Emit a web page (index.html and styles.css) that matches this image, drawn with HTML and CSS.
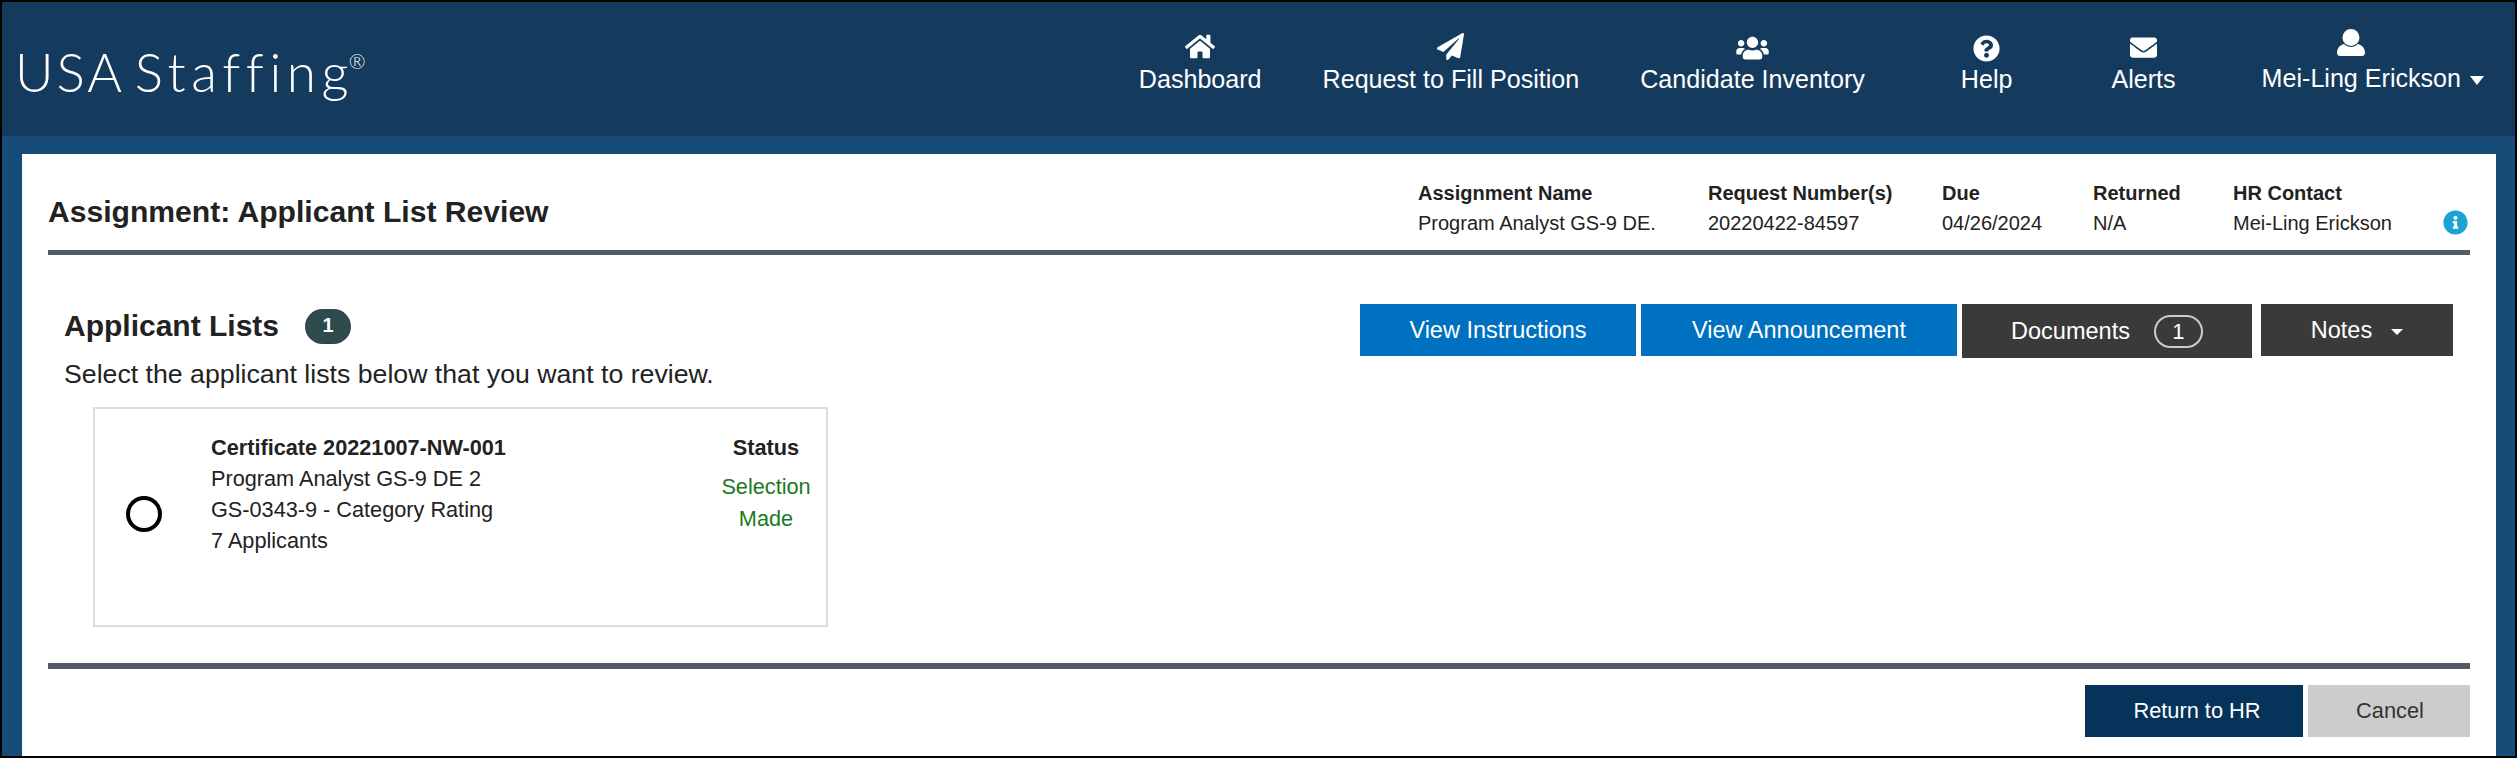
FILE: index.html
```html
<!DOCTYPE html>
<html lang="en">
<head>
  <meta charset="UTF-8">
  <title>USA Staffing - Applicant List Review</title>
  <link rel="stylesheet" href="styles.css">
</head>
<body>
  <div class="page">
    <header class="topbar">
      <div class="logo">USA <span class="logo-word">Staffin<span class="logo-end">g</span></span><sup>®</sup></div>
      <nav class="nav">
        <a class="nav-item">
          <svg class="icon-home" viewBox="0 0 576 512"><path d="M280.37 148.26L96 300.11V464a16 16 0 0 0 16 16l112.06-.29a16 16 0 0 0 15.92-16V368a16 16 0 0 1 16-16h64a16 16 0 0 1 16 16v95.64a16 16 0 0 0 16 16.05L464 480a16 16 0 0 0 16-16V300L295.67 148.26a12.19 12.19 0 0 0-15.3 0zM571.6 251.47L488 182.56V44.05a12 12 0 0 0-12-12h-56a12 12 0 0 0-12 12v72.61L318.47 43a48 48 0 0 0-61 0L4.34 251.47a12 12 0 0 0-1.6 16.9l25.5 31A12 12 0 0 0 45.15 301l235.22-193.74a12.19 12.19 0 0 1 15.3 0L530.9 301a12 12 0 0 0 16.9-1.6l25.5-31a12 12 0 0 0-1.7-16.93z"/></svg>
          <span>Dashboard</span>
        </a>
        <a class="nav-item">
          <svg class="icon-plane" viewBox="0 0 512 512"><path d="M476 3.2L12.5 270.6c-18.1 10.4-15.8 35.6 2.2 43.2L121 358.4l287.3-253.2c5.5-4.9 13.3 2.6 8.6 8.3L176 407v80.5c0 23.6 28.5 32.9 42.5 15.8L282 426l124.6 52.2c14.2 6 30.4-2.9 33-18.2l72-432C515 7.8 493.3-6.8 476 3.2z"/></svg>
          <span>Request to Fill Position</span>
        </a>
        <a class="nav-item">
          <svg class="icon-users" viewBox="0 0 640 512"><path d="M96 224c35.3 0 64-28.7 64-64s-28.7-64-64-64-64 28.7-64 64 28.7 64 64 64zm448 0c35.3 0 64-28.7 64-64s-28.7-64-64-64-64 28.7-64 64 28.7 64 64 64zm32 32h-64c-17.6 0-33.5 7.1-45.1 18.6 40.3 22.1 68.9 62 75.1 109.4h66c17.7 0 32-14.3 32-32v-32c0-35.3-28.7-64-64-64zm-256 0c61.9 0 112-50.1 112-112S381.9 32 320 32 208 82.1 208 144s50.1 112 112 112zm76.8 32h-8.3c-20.8 10-43.9 16-68.5 16s-47.6-6-68.5-16h-8.3C179.6 288 128 339.6 128 403.2V432c0 26.5 21.5 48 48 48h288c26.5 0 48-21.5 48-48v-28.8c0-63.6-51.6-115.2-115.2-115.2zm-223.7-13.4C161.5 263.1 145.6 256 128 256H64c-35.3 0-64 28.7-64 64v32c0 17.7 14.3 32 32 32h65.9c6.3-47.4 34.9-87.3 75.2-109.4z"/></svg>
          <span>Candidate Inventory</span>
        </a>
        <a class="nav-item nav-help">
          <svg class="icon-help" viewBox="0 0 512 512"><path d="M504 256c0 136.997-111.043 248-248 248S8 392.997 8 256C8 119.083 119.043 8 256 8s248 111.083 248 248zM262.655 90c-54.497 0-89.255 22.957-116.549 63.758-3.536 5.286-2.353 12.415 2.715 16.258l34.699 26.31c5.205 3.947 12.621 3.008 16.665-2.122 17.864-22.658 30.113-35.797 57.303-35.797 20.429 0 45.698 13.148 45.698 32.958 0 14.976-12.363 22.667-32.534 33.976C247.128 238.528 216 254.941 216 296v4c0 6.627 5.373 12 12 12h56c6.627 0 12-5.373 12-12v-1.333c0-28.462 83.186-29.647 83.186-106.667 0-58.002-60.165-102-116.531-102zM256 338c-25.365 0-46 20.635-46 46 0 25.364 20.635 46 46 46s46-20.636 46-46c0-25.365-20.635-46-46-46z"/></svg>
          <span>Help</span>
        </a>
        <a class="nav-item nav-alerts">
          <svg class="icon-mail" viewBox="0 0 512 512"><path d="M502.3 190.8c3.9-3.1 9.7-.2 9.7 4.7V400c0 26.5-21.5 48-48 48H48c-26.5 0-48-21.5-48-48V195.6c0-5 5.7-7.8 9.7-4.7 22.4 17.4 52.1 39.5 154.1 113.6 21.1 15.4 56.7 47.8 92.2 47.6 35.7.3 72-32.8 92.3-47.6 102-74.1 131.6-96.3 154-113.7zM256 320c23.2.4 56.6-29.2 73.4-41.4 132.7-96.3 142.8-104.7 173.4-128.7 5.8-4.5 9.2-11.5 9.2-18.9v-19c0-26.5-21.5-48-48-48H48C21.5 64 0 85.5 0 112v19c0 7.4 3.4 14.3 9.2 18.9 30.6 23.9 40.7 32.4 173.4 128.7 16.8 12.2 50.2 41.8 73.4 41.4z"/></svg>
          <span>Alerts</span>
        </a>
        <a class="nav-item nav-user">
          <svg class="icon-user" viewBox="0 0 28 27"><circle cx="14" cy="8.5" r="8.5"/><path d="M0 24c0-5 3-8 7-9 2 2 4.500 3 7 3s5-1 7-3c4 1 7 4 7 9 0 2-1.500 3-3 3H3c-1.500 0-3-1-3-3z"/></svg>
          <span>Mei-Ling Erickson <i class="caret-user"></i></span>
        </a>
      </nav>
    </header>

    <main class="panel">
      <div class="assignment-head">
        <h1>Assignment: Applicant List Review</h1>
        <div class="meta">
          <div class="meta-col col-name"><b>Assignment Name</b><span>Program Analyst GS-9 DE.</span></div>
          <div class="meta-col col-req"><b>Request Number(s)</b><span>20220422-84597</span></div>
          <div class="meta-col col-due"><b>Due</b><span>04/26/2024</span></div>
          <div class="meta-col col-ret"><b>Returned</b><span>N/A</span></div>
          <div class="meta-col col-hr"><b>HR Contact</b><span>Mei-Ling Erickson</span></div>
          <svg class="icon-info" viewBox="0 0 512 512"><path d="M256 8C119.043 8 8 119.083 8 256c0 136.997 111.043 248 248 248s248-111.003 248-248C504 119.083 392.957 8 256 8zm0 110c23.196 0 42 18.804 42 42s-18.804 42-42 42-42-18.804-42-42 18.804-42 42-42zm56 254c0 6.627-5.373 12-12 12h-88c-6.627 0-12-5.373-12-12v-24c0-6.627 5.373-12 12-12h12v-64h-12c-6.627 0-12-5.373-12-12v-24c0-6.627 5.373-12 12-12h64c6.627 0 12 5.373 12 12v100h12c6.627 0 12 5.373 12 12v24z"/></svg>
        </div>
      </div>

      <section class="lists">
        <div class="lists-left">
          <h2>Applicant Lists <span class="count">1</span></h2>
          <p class="hint">Select the applicant lists below that you want to review.</p>
          <div class="card">
            <span class="radio"></span>
            <div class="card-info">
              <b>Certificate 20221007-NW-001</b>
              <span>Program Analyst GS-9 DE 2</span>
              <span>GS-0343-9 - Category Rating</span>
              <span>7 Applicants</span>
            </div>
            <div class="card-status">
              <b>Status</b>
              <span>Selection Made</span>
            </div>
          </div>
        </div>
        <div class="actions">
          <button class="btn btn-blue btn-instructions">View Instructions</button>
          <button class="btn btn-blue btn-announcement">View Announcement</button>
          <button class="btn btn-dark btn-documents">Documents <span class="doc-count">1</span></button>
          <button class="btn btn-dark btn-notes">Notes <i class="caret-notes"></i></button>
        </div>
      </section>

      <footer class="foot">
        <button class="btn-return">Return to HR</button>
        <button class="btn-cancel">Cancel</button>
      </footer>
    </main>
  </div>
</body>
</html>
```

FILE: styles.css
```css
* {
  box-sizing: border-box;
}

body {
  margin: 0;
  font-family: "Liberation Sans", Arial, sans-serif;
  color: #222;
}

.page {
  width: 2517px;
  height: 758px;
  border: 2px solid #000;
  background: #174b78;
  overflow: hidden;
}

/* top bar */
.topbar {
  height: 134px;
  background: #143a5e;
  display: flex;
  justify-content: space-between;
  color: #fff;
}

.logo {
  font-family: Lato, sans-serif;
  font-weight: 300;
  font-size: 53px;
  letter-spacing: 3px;
  word-spacing: -6px;
  line-height: 52px;
  padding: 44px 0 0 13px;
}

.logo-word {
  letter-spacing: 5.6px;
}

.logo-end {
  letter-spacing: 0;
}

.logo sup {
  font-size: 20px;
  line-height: 0;
  letter-spacing: 0;
  vertical-align: 23px;
}

.nav {
  display: flex;
  gap: 61px;
  padding: 0 31px 0 0;
  height: 92px;
}

.nav-item {
  display: flex;
  flex-direction: column;
  align-items: center;
  justify-content: flex-end;
  font-size: 25.1px;
  line-height: 30px;
  white-space: nowrap;
}

.nav-item svg {
  fill: #fff;
  display: block;
}

.nav-help {
  margin-left: 35px;
}

.nav-alerts {
  margin-left: 38px;
}

.nav-user {
  margin-left: 25px;
}

.nav-user span {
  position: relative;
  top: -1px;
}

.icon-home {
  width: 30px;
  height: 27px;
  margin-bottom: 4px;
}

.icon-plane {
  width: 27px;
  height: 27px;
  margin-bottom: 4px;
}

.icon-users {
  width: 33px;
  height: 26px;
  margin-bottom: 3px;
}

.icon-help {
  width: 27px;
  height: 27px;
  margin-bottom: 2px;
}

.icon-mail {
  width: 27px;
  height: 27px;
  margin-bottom: 3px;
}

.icon-user {
  width: 28px;
  height: 27px;
  margin: 0 44px 8px 0;
}

.caret-user {
  display: inline-block;
  width: 0;
  height: 0;
  margin-left: 2px;
  border-left: 7.5px solid transparent;
  border-right: 7.5px solid transparent;
  border-top: 9px solid #fff;
  vertical-align: 2px;
}

/* white panel */
.panel {
  margin: 18px 19px 0 20px;
  height: 602px;
  background: #fff;
  padding: 0 26px 0 26px;
  display: flex;
  flex-direction: column;
}

.assignment-head {
  height: 101px;
  border-bottom: 5px solid #555b66;
  display: flex;
  justify-content: space-between;
}

h1 {
  margin: 42px 0 0;
  font-size: 30.1px;
  line-height: 32px;
}

.meta {
  display: flex;
  padding-top: 24px;
  font-size: 20px;
  line-height: 30px;
}

.meta-col {
  display: flex;
  flex-direction: column;
}

.col-name { width: 290px; }
.col-req { width: 234px; }
.col-due { width: 151px; }
.col-ret { width: 140px; }
.col-hr { width: 210px; }

.icon-info {
  width: 25px;
  height: 25px;
  fill: #1ba3d1;
  margin-top: 32px;
  margin-right: 2px;
}

/* applicant lists */
.lists {
  flex: 1;
  display: flex;
  justify-content: space-between;
  padding-top: 53px;
}

.lists-left {
  padding-left: 16px;
}

h2 {
  margin: 0;
  font-size: 30px;
  line-height: 36px;
  display: flex;
  align-items: center;
  gap: 26px;
  height: 36px;
}

.count {
  width: 46px;
  height: 35px;
  border-radius: 18px;
  background: #2e4a4e;
  color: #fff;
  font-size: 20px;
  line-height: 33px;
  text-align: center;
}

.hint {
  margin: 14px 0 0;
  font-size: 26.7px;
  line-height: 32px;
}

.card {
  width: 735px;
  height: 220px;
  margin: 17px 0 0 29px;
  border: 2px solid #ddd;
  display: flex;
}

.radio {
  width: 36px;
  height: 36px;
  margin: 87px 0 0 31px;
  border: 4px solid #000;
  border-radius: 50%;
}

.card-info {
  width: 499px;
  margin-left: 49px;
  padding-top: 23px;
  display: flex;
  flex-direction: column;
  font-size: 21.7px;
  line-height: 31px;
}

.card-status {
  width: 112px;
  padding-top: 23px;
  display: flex;
  flex-direction: column;
  align-items: center;
  font-size: 21.7px;
  line-height: 31px;
  text-align: center;
}

.card-status span {
  margin-top: 8px;
  color: #1a7a1a;
  line-height: 32px;
}

/* buttons */
.actions {
  display: flex;
  align-items: flex-start;
  gap: 5px;
  padding-right: 17px;
  margin-top: -4px;
}

.btn {
  border: 0;
  height: 52px;
  margin: 0;
  padding: 0;
  color: #fff;
  font-family: inherit;
  font-size: 23.5px;
  display: flex;
  align-items: center;
  justify-content: center;
}

.btn-blue {
  background: #0070c0;
}

.btn-dark {
  background: #3a3a3a;
}

.btn-instructions {
  width: 276px;
}

.btn-announcement {
  width: 316px;
}

.btn-documents {
  width: 290px;
  height: 54px;
  gap: 24px;
}

.doc-count {
  width: 49px;
  height: 33px;
  border: 2px solid #ccc;
  border-radius: 17px;
  font-size: 22px;
  line-height: 29px;
}

.btn-notes {
  width: 192px;
  margin-left: 4px;
  gap: 19px;
}

.caret-notes {
  width: 0;
  height: 0;
  border-left: 6px solid transparent;
  border-right: 6px solid transparent;
  border-top: 6px solid #fff;
  margin-top: 3px;
}

/* footer */
.foot {
  margin-bottom: 19px;
  border-top: 6px solid #555b66;
  padding-top: 16px;
  display: flex;
  justify-content: flex-end;
  gap: 5px;
}

.foot button {
  height: 52px;
  border: 0;
  font-family: inherit;
  font-size: 21.8px;
}

.btn-return {
  width: 218px;
  padding: 0 0 0 6px;
  background: #063359;
  color: #fff;
}

.btn-cancel {
  width: 162px;
  padding: 0 0 0 2px;
  background: #ccc;
  color: #333;
}
```
